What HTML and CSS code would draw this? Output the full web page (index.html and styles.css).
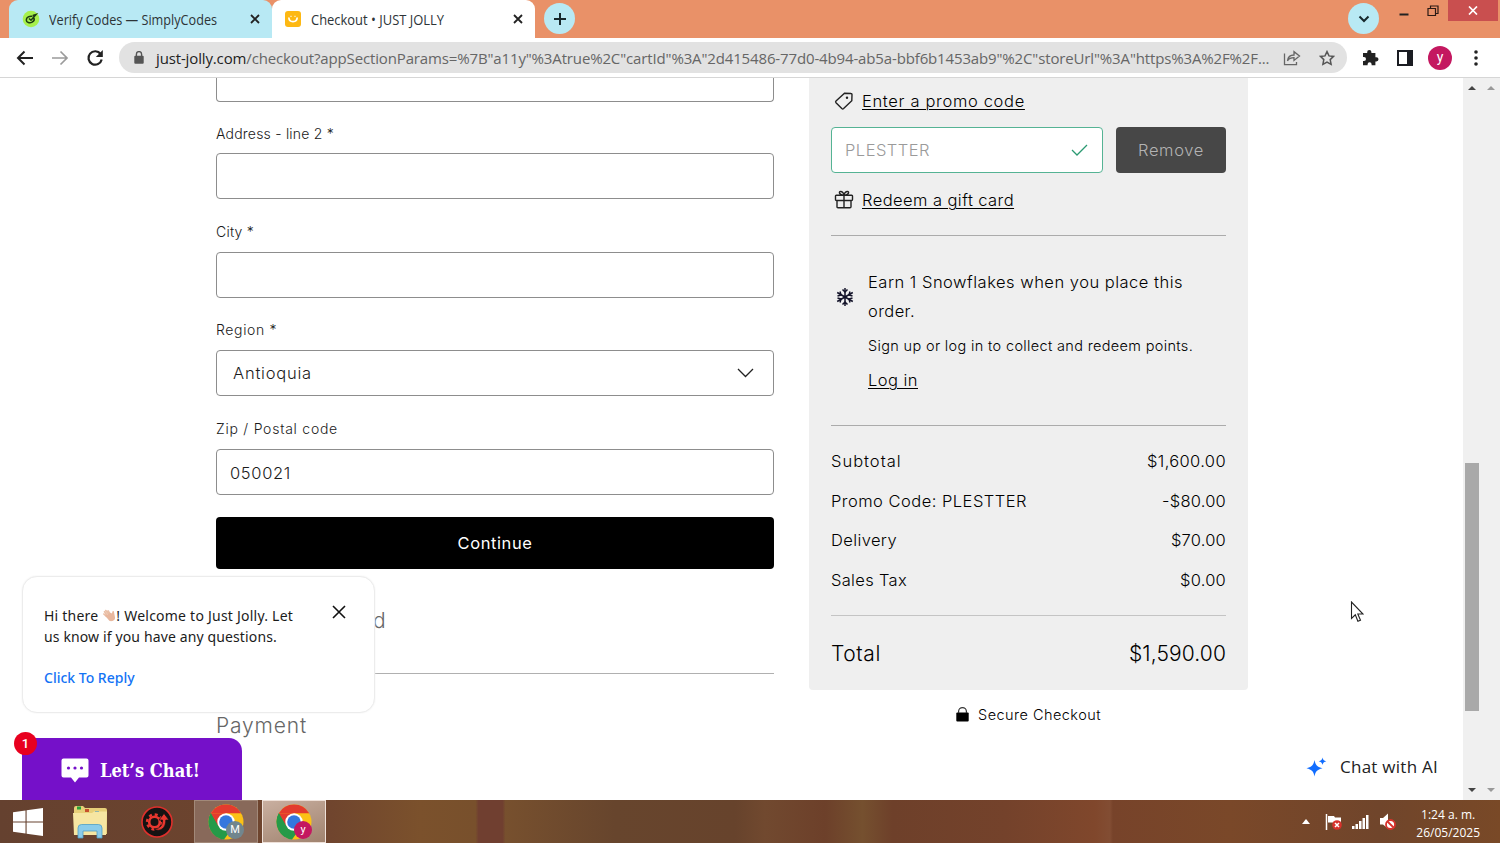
FILE: index.html
```html
<!DOCTYPE html>
<html lang="en">
<head>
<meta charset="utf-8">
<title>Checkout • JUST JOLLY</title>
<link rel="stylesheet" href="styles.css">
</head>
<body>
<div class="screen">
  <div class="tabstrip">
    <div class="tab tab-idle">
      <svg class="fav" width="18" height="18" viewBox="0 0 18 18"><circle cx="9" cy="9" r="8.300" fill="#a6f04c"/><path d="M10.500 6.300C7.500 5.600 4.300 7.500 4.300 10c0 2.600 3.500 3.500 5.800 2.200C12 11 12.500 9 11.800 7.800M7 8.500l2 1.800 5-5.800-3.200 1" fill="none" stroke="#1d3b12" stroke-width="1.500"/></svg>
      <span class="tab-title t1">Verify Codes — SimplyCodes</span>
      <svg class="x" width="10" height="10" viewBox="0 0 10 10"><path d="M1 1l8 8M9 1L1 9" stroke="#222" stroke-width="1.800"/></svg>
    </div>
    <div class="tab tab-live">
      <svg class="fav" width="18" height="18" viewBox="0 0 18 18"><rect x="1" y="1" width="16" height="16" rx="3" fill="#fdb813"/><path d="M4.800 7.500c.4 5.500 8 5.500 8.400 0" fill="none" stroke="#fff" stroke-width="1.700"/><path d="M6.500 6.300h1M10.500 6.300h1" stroke="#fff" stroke-width="1.200"/></svg>
      <span class="tab-title t2">Checkout • JUST JOLLY</span>
      <svg class="x" width="10" height="10" viewBox="0 0 10 10"><path d="M1 1l8 8M9 1L1 9" stroke="#222" stroke-width="1.800"/></svg>
    </div>
    <div class="round newtab"><svg width="14" height="14" viewBox="0 0 14 14"><path d="M7 1v12M1 7h12" stroke="#16282c" stroke-width="2"/></svg></div>
    <div class="round tabsearch"><svg width="12" height="8" viewBox="0 0 12 8"><path d="M1.500 1.500 6 6l4.500-4.500" fill="none" stroke="#16282c" stroke-width="2"/></svg></div>
    <div class="winbtns">
      <svg width="10" height="14" viewBox="0 0 10 14"><path d="M.5 12.500h9" stroke="#222" stroke-width="2"/></svg>
      <svg width="12" height="12" viewBox="0 0 12 12"><path d="M1 3.500h7.500v7H1zM3.500 3V1H11v7.500H9" fill="none" stroke="#2a1a14" stroke-width="1.200"/></svg>
    </div>
    <div class="winclose"><svg width="10" height="9" viewBox="0 0 10 9"><path d="M1 .5l8 8M9 .5l-8 8" stroke="#fff" stroke-width="1.700"/></svg></div>
  </div>

  <div class="toolbar">
    <svg class="nav" width="18" height="16" viewBox="0 0 18 16"><path d="M17 8H2M8.500 1.500 2 8l6.500 6.500" fill="none" stroke="#222" stroke-width="2"/></svg>
    <svg class="nav" width="18" height="16" viewBox="0 0 18 16"><path d="M1 8h15M9.500 1.500 16 8l-6.500 6.500" fill="none" stroke="#9b9b9b" stroke-width="1.700"/></svg>
    <svg class="nav reload" width="18" height="18" viewBox="0 0 18 18"><path d="M14.600 5A6.700 6.700 0 1 0 15.700 10.500" fill="none" stroke="#222" stroke-width="2.200"/><path d="M16.800 1v7h-7z" fill="#222"/></svg>
    <div class="omnibox">
      <svg width="10" height="13" viewBox="0 0 10 13"><rect x=".3" y="4.700" width="9.400" height="8" rx="1" fill="#555"/><path d="M2.400 5V3.200a2.600 2.600 0 0 1 5.200 0V5" fill="none" stroke="#555" stroke-width="1.400"/></svg>
      <span class="url"><b>just-jolly.com</b>/checkout?appSectionParams=%7B"a11y"%3Atrue%2C"cartId"%3A"2d415486-77d0-4b94-ab5a-bbf6b1453ab9"%2C"storeUrl"%3A"https%3A%2F%2F...</span>
      <svg class="share" width="18" height="16" viewBox="0 0 18 16"><path d="M1.500 3.500v11.200h12V12M4.500 10.800C5 7 7.500 5 11 5V1.700L16.500 6 11 10.500V7.700C8 7.700 6 8.500 4.500 10.800z" fill="none" stroke="#666" stroke-width="1.300"/></svg>
      <svg class="star" width="16" height="16" viewBox="0 0 16 16"><path d="M8 1.600l2 4.300 4.600.5-3.400 3.200.9 4.700L8 12l-4.100 2.300.9-4.700L1.400 6.400 6 5.900z" fill="none" stroke="#555" stroke-width="1.500"/></svg>
    </div>
    <svg class="puzzle" width="17" height="17" viewBox="0 0 17 17"><path d="M1 4h4.200V3a2.100 2.100 0 0 1 4.200 0v1h4v4.200h1a2.100 2.100 0 0 1 0 4.200h-1V16.300H9.600v-1a2 2 0 0 0-4 0v1H1v-4.200h1a2 2 0 0 0 0-4H1z" fill="#222"/></svg>
    <svg class="panel" width="16" height="16" viewBox="0 0 16 16"><rect x="1" y="1" width="14" height="14" fill="#fff" stroke="#1a1c22" stroke-width="2"/><path d="M10 1h5v14h-5z" fill="#1a1c22"/></svg>
    <div class="avatar">y</div>
    <svg class="dots" width="4" height="16" viewBox="0 0 4 16"><circle cx="2" cy="2" r="1.800"/><circle cx="2" cy="8" r="1.800"/><circle cx="2" cy="14" r="1.800"/></svg>
  </div>

  <div class="viewport">
    <div class="page">
      <div class="form">
        <div class="input first"></div>
        <div class="label"><span class="l1">Address - line 2 *</span></div>
        <div class="input"></div>
        <div class="label tall"><span class="l2">City *</span></div>
        <div class="input"></div>
        <div class="label mid"><span class="l3">Region *</span></div>
        <div class="input select"><span class="v1">Antioquia</span><svg width="17" height="10" viewBox="0 0 17 10"><path d="M1 1l7.500 7.500L16 1" fill="none" stroke="#222" stroke-width="1.300"/></svg></div>
        <div class="label tall"><span class="l4">Zip / Postal code</span></div>
        <div class="input"><span class="v2">050021</span></div>
        <div class="continue"><span class="c1">Continue</span></div>
        <div class="step covered"><span>d</span></div>
        <div class="step second"><span class="s2">Payment</span></div>
      </div>

      <div class="side">
        <div class="summary">
          <div class="promo">
            <svg width="20" height="20" viewBox="0 0 20 20"><path d="M10.500 2.200 17 2.500q1 0 1 1l-.2 6.300L9.600 17.600q-.9.800-1.800 0L2 11.800q-.8-.9 0-1.700z" fill="none" stroke="#222" stroke-width="1.400"/><circle cx="13" cy="6.700" r="1.200" fill="#222"/></svg>
            <a class="p1">Enter a promo code</a>
          </div>
          <div class="coupon">
            <div class="code"><span class="p2">PLESTTER</span><svg width="17" height="12" viewBox="0 0 17 12"><path d="M1 6l5 5L16 1" fill="none" stroke="#2b9a72" stroke-width="1.300"/></svg></div>
            <div class="remove"><span class="p3">Remove</span></div>
          </div>
          <div class="gift">
            <svg width="20" height="20" viewBox="0 0 20 20"><path d="M1.500 6q0-.8.8-.8h15.400q.8 0 .8.800v3.500q0 1-1 1h-15q-1 0-1-1zM3 10.500h14v6.300q0 1-1 1H4q-1 0-1-1zM10 5.200v12.600M10 5.200C5 5.200 4.500 1.500 6.500 1.500S10 3.500 10 5.200c0-1.700 1.500-3.700 3.500-3.700S15 5.200 10 5.200z" fill="none" stroke="#222" stroke-width="1.400" stroke-linejoin="round"/></svg>
            <a class="p4">Redeem a gift card</a>
          </div>
          <div class="points">
            <svg width="18" height="20" viewBox="0 0 18 20"><g fill="none" stroke="#14142a" stroke-width="1.500"><path d="M9 1v18M1.200 5.500l15.600 9M16.800 5.500l-15.600 9"/><path d="M6.500 2.500 9 5l2.500-2.500M6.500 17.500 9 15l2.500 2.500M1.500 9l3.500-1-1-3.500M16.500 11l-3.500 1 1 3.500M14 4.500 13 8l3.500 1M4 15.500 5 12l-3.500-1"/></g></svg>
            <div class="points-text">
              <p><span class="e1">Earn 1 Snowflakes when you place this</span><br><span class="e2">order.</span></p>
              <p class="small"><span class="e3">Sign up or log in to collect and redeem points.</span></p>
              <p class="login"><a class="e4">Log in</a></p>
            </div>
          </div>
          <div class="sums">
            <div class="row"><span class="r1">Subtotal</span><span class="amount a1">$1,600.00</span></div>
            <div class="row"><span class="r2">Promo Code: PLESTTER</span><span class="amount">-$80.00</span></div>
            <div class="row"><span class="r3">Delivery</span><span class="amount">$70.00</span></div>
            <div class="row"><span class="r4">Sales Tax</span><span class="amount">$0.00</span></div>
          </div>
          <div class="total"><span class="r5">Total</span><span class="a5">$1,590.00</span></div>
        </div>
        <div class="secure"><svg width="13" height="15" viewBox="0 0 13 15"><rect x=".3" y="5.500" width="12.400" height="9" rx="1"/><path d="M2.600 6V4.500a3.900 3.900 0 0 1 7.800 0V6" fill="none" stroke="#333" stroke-width="1.200"/></svg><span class="k1">Secure Checkout</span></div>
      </div>

      <div class="bubble">
        <div class="msg"><span class="m1">Hi there <svg width="14" height="13" viewBox="0 0 14 13"><path d="M4.500 5.500 2.500 2.700M6 4.500 3.800 1.500M7.800 4.500 6 1.800M4.500 7.500 1.800 5" stroke="#eabfa6" stroke-width="1.600" stroke-linecap="round"/><path d="M3 6.500 8.800 3.800c1 1.500 1.200.4 1.700-1.200.3-.9 1.500-.5 1.500.5L13 8.500c.4 3-3.500 4.500-5.700 3.200z" fill="#e8b79d"/></svg>! Welcome to Just Jolly. Let</span><br><span class="m2">us know if you have any questions.</span></div>
        <div class="reply"><span class="m3">Click To Reply</span></div>
        <svg class="bubble-x" width="14" height="14" viewBox="0 0 14 14"><path d="M1 1l12 12M13 1L1 13" stroke="#111" stroke-width="1.600"/></svg>
      </div>
      <div class="letschat">
        <svg width="28" height="25" viewBox="0 0 28 25"><path d="M2.500.5h23q2 0 2 2v15q0 2-2 2H18L14 24.500 10 19.500H2.500q-2 0-2-2v-15q0-2 2-2z" fill="#fff"/><g fill="#7510c9"><circle cx="7.500" cy="10" r="1.600"/><circle cx="14" cy="10" r="1.600"/><circle cx="20.500" cy="10" r="1.600"/></g></svg>
        <span class="m4">Let’s Chat!</span>
        <div class="badge">1</div>
      </div>
      <div class="ai">
        <svg width="21" height="20" viewBox="0 0 21 20"><path d="M8.500 3c1 5 2.500 6.800 8 8.300-5.500 1.400-7 3.200-8 8.200-1-5-2.500-6.800-8-8.200 5.500-1.500 7-3.300 8-8.300zM16.500.5c.5 2.300 1.200 3 3.800 3.800-2.600.7-3.300 1.500-3.800 3.800-.5-2.300-1.200-3.100-3.800-3.800 2.600-.8 3.300-1.500 3.800-3.800z" fill="#116dff"/></svg>
        <span class="m5">Chat with AI</span>
      </div>
      <svg class="cursor" width="14" height="22" viewBox="0 0 14 22"><path d="M1.500 1v16.500l3.800-3.700 2.600 6.500 2.600-1.100L7.800 13H13z" fill="#fff" stroke="#222" stroke-width="1.100"/></svg>
    </div>
    <div class="scroll">
      <div class="arrows"><i class="up"></i><i class="up pale"></i></div>
      <div class="thumb"></div>
      <div class="arrows"><i class="down"></i><i class="down pale"></i></div>
    </div>
  </div>

  <div class="taskbar">
    <svg class="win" width="30" height="28" viewBox="0 0 30 28"><path d="M0 4.200 12.500 2.400v11H0zM13.600 2.200 30 0v13.400H13.600zM0 14.500h12.500v11L0 23.800zM13.600 14.500H30V28l-16.400-2.300z" fill="#fff"/></svg>
    <svg class="files" width="36" height="34" viewBox="0 0 36 34"><path d="M2 3q0-2 2-2h7l2 2h20q2 0 2 2v24H2z" fill="#e7cf78"/><path d="M5 1.500h4v3H5z" fill="#29a33b"/><path d="M13 4h4v3h-4z" fill="#c7502c"/><path d="M23 6h4v3h-4z" fill="#2d86bb"/><path d="M1 8h19l2-1.500h13L34 30H2z" fill="#f6e6a2"/><path d="M6 33V23q0-3.500 3.500-3.500h17Q30 19.500 30 23v10h-5v-7H11v7z" fill="#8accea" stroke="#4e9fc7" stroke-width=".8"/></svg>
    <svg class="gear" width="34" height="34" viewBox="0 0 34 34"><circle cx="17" cy="17" r="15" fill="#151313" stroke="#de302c" stroke-width="1.600"/><circle cx="14.500" cy="17" r="5.300" fill="none" stroke="#e8372f" stroke-width="2.600"/><circle cx="14.500" cy="17" r="7.500" fill="none" stroke="#e8372f" stroke-width="2.400" stroke-dasharray="3 2.890"/><path d="M14 24c6 0 9-4 8.500-9H19l5-6.500 5 6.500h-3.200c.2 8-5.500 12.500-11.800 9z" fill="#e8372f" stroke="#151313" stroke-width=".7"/></svg>
    <div class="task">
      <svg width="38" height="38" viewBox="0 0 38 38"><circle cx="19" cy="19" r="17.500" fill="#fbc116"/><path d="M3.800 10.300A17.500 17.500 0 0 1 34.200 10.300H19z" fill="#e33b2e"/><path d="M3.800 10.300A17.500 17.500 0 0 0 17 36.400l9.600-13L19 19z" fill="#259a48"/><path d="M3.800 10.300 11.400 23.400 19 10.300z" fill="#e33b2e"/><path d="M3.800 10.300 11.400 23.400 17 26l-5 8.500A17.500 17.500 0 0 1 3.800 10.300z" fill="#259a48"/><circle cx="19" cy="19" r="8.700" fill="#fff"/><circle cx="19" cy="19" r="6.800" fill="#3577de"/></svg>
      <div class="who grey">M</div>
    </div>
    <div class="task live">
      <svg width="38" height="38" viewBox="0 0 38 38"><circle cx="19" cy="19" r="17.500" fill="#fbc116"/><path d="M3.800 10.300A17.500 17.500 0 0 1 34.200 10.300H19z" fill="#e33b2e"/><path d="M3.800 10.300A17.500 17.500 0 0 0 17 36.400l9.600-13L19 19z" fill="#259a48"/><path d="M3.800 10.300 11.400 23.400 19 10.300z" fill="#e33b2e"/><path d="M3.800 10.300 11.400 23.400 17 26l-5 8.500A17.500 17.500 0 0 1 3.800 10.300z" fill="#259a48"/><circle cx="19" cy="19" r="8.700" fill="#fff"/><circle cx="19" cy="19" r="6.800" fill="#3577de"/></svg>
      <div class="who pink">y</div>
    </div>
    <div class="tray">
      <svg width="8" height="5" viewBox="0 0 8 5"><path d="M0 5l4-5 4 5z" fill="#fff"/></svg>
      <svg class="flag" width="17" height="18" viewBox="0 0 17 18"><path d="M1.500 1v16" stroke="#fff" stroke-width="1.500"/><path d="M3 3h6l1 1.500h6V11H9L8 9.500H3z" fill="#fff"/><circle cx="12" cy="12" r="4.800" fill="#d8322c"/><path d="M10 10l4 4M14 10l-4 4" stroke="#fff" stroke-width="1.500"/></svg>
      <svg width="17" height="14" viewBox="0 0 17 14"><path d="M0 11h2.500v3H0zM3.500 9H6v5H3.500zM7 6h2.500v8H7zM10.500 3H13v11h-2.500zM14 0h2.500v14H14z" fill="#fff"/></svg>
      <svg width="17" height="17" viewBox="0 0 17 17"><path d="M1 5h3l5-4.500v15L4 11.500H1z" fill="#fff"/><circle cx="11.500" cy="11.500" r="4.500" fill="#fff" stroke="#d8322c" stroke-width="1.800"/><path d="M8.500 8.500l6 6" stroke="#d8322c" stroke-width="1.800"/></svg>
      <div class="clock"><span>1:24 a. m.</span><span>26/05/2025</span></div>
    </div>
  </div>
</div>
</body>
</html>
```

FILE: styles.css
```css
* { box-sizing: border-box; }
body { margin: 0; font-family: Inter, "Open Sans", sans-serif; color: #1b1b1b; }
svg { display: block; flex: none; }
p { margin: 0; }
span, a { white-space: nowrap; }
.screen { width: 1500px; height: 843px; overflow: hidden; display: flex; flex-direction: column; background: #fff; }

.tabstrip { height: 38px; flex: none; background: #e99168; display: flex; font-family: "Open Sans", "Noto Sans", sans-serif; }
.tab { display: flex; align-items: center; height: 38px; }
.tab-title { font-size: 14px; color: #2d3437; transform-origin: left; }
.t1 { transform: scaleX(0.903); }
.t2 { transform: scaleX(0.924); }
.tab .fav { margin-right: 9px; }
.tab .x { margin-left: auto; }
.tab-idle { width: 263px; margin-left: 9px; padding: 0 12px 0 13px; background: #b8e9f4; border-radius: 9px 9px 0 0; }
.tab-live { width: 263px; padding: 0 12px 0 12px; background: #fff; border-radius: 9px 9px 0 0; }
.round { width: 31px; height: 31px; border-radius: 50%; background: #b8e9f4; display: flex; align-items: center; justify-content: center; margin-top: 3px; }
.newtab { margin-left: 9px; }
.tabsearch { margin-left: 773px; }
.winbtns { display: flex; gap: 18px; padding: 5px 0 0 20px; width: 69px; }
.winbtns svg:first-child { margin-top: -3px; }
.winclose { width: 50px; height: 21px; background: #c94f4f; display: flex; align-items: center; justify-content: center; }

.toolbar { height: 40px; flex: none; border-bottom: 1px solid #d6d6d6; display: flex; align-items: center; padding: 0 0 0 16px; }
.nav { margin-right: 17px; }
.reload { margin-right: 15px; }
.omnibox { width: 1228px; height: 31px; border-radius: 16px; background: #e2e2e2; display: flex; align-items: center; padding-left: 15px; }
.url { margin-left: 12px; font: 15px "Open Sans", "Noto Sans", sans-serif; letter-spacing: -0.14px; color: #666; width: 1113px; flex: none; }
.url b { font-weight: 400; color: #222; }
.share { margin-left: 14px; }
.star { margin-left: 18px; }
.puzzle { margin-left: 15px; }
.panel { margin-left: 18px; }
.avatar { width: 24px; height: 24px; margin-left: 15px; border-radius: 50%; background: #c41860; color: #fff; font: 14px/22px Roboto, sans-serif; text-align: center; }
.dots { margin-left: 22px; fill: #222; }

.viewport { height: 722px; flex: none; display: flex; }
.page { position: relative; width: 1463px; height: 722px; overflow: hidden; display: flex; align-items: flex-start; padding-left: 216px; gap: 35px; }
.form { width: 558px; }
.input { height: 46px; border: 1px solid #8d8d8d; border-radius: 4px; display: flex; align-items: center; padding: 1px 0 0 13px; font-size: 16.500px; font-weight: 300; }
.input.first { height: 24px; border-top: 0; border-radius: 0 0 4px 4px; }
.input.select { justify-content: space-between; padding: 0 19px 0 16px; }
.label { height: 51px; padding-top: 20px; font-size: 14px; line-height: 24px; font-weight: 300; }
.label.mid { height: 52px; }
.label.tall { height: 53px; padding-top: 21px; }
.l1, .l2 { letter-spacing: 0.21px; }
.l3 { letter-spacing: 0.63px; }
.l4 { letter-spacing: 0.75px; }
.v1 { letter-spacing: 0.78px; }
.v2 { letter-spacing: 0.67px; }
.c1 { letter-spacing: 0.6px; }
.s2 { letter-spacing: 0.83px; }
.continue { margin-top: 22px; height: 52px; background: #000; color: #fff; border-radius: 4px; display: flex; align-items: center; justify-content: center; font-size: 16.500px; }
.step { height: 105px; border-bottom: 1px solid #b0b0b0; font-size: 21px; font-weight: 300; line-height: 104px; color: #666; }
.step.covered { padding-left: 157px; }
.step.second { border: 0; }

.side { width: 439px; }
.summary { background: #efefef; height: 612px; padding: 0 22px; border-radius: 0 0 4px 4px; font-size: 16.500px; font-weight: 300; color: #000; }
.promo { display: flex; align-items: center; height: 49px; padding-left: 3px; gap: 8px; padding-bottom: 3px; }
.promo a, .gift a, .login a { text-decoration: underline; text-underline-offset: 2px; text-decoration-thickness: 1px; }
.p1 { letter-spacing: 0.67px; }
.p2 { letter-spacing: 0.48px; }
.p3 { letter-spacing: 0.65px; }
.p4 { letter-spacing: 0.43px; }
.coupon { display: flex; gap: 13px; height: 46px; }
.code { width: 272px; border: 1px solid #55b394; border-radius: 4px; background: #fff; color: #9a9a9a; display: flex; align-items: center; justify-content: space-between; padding: 0 14px 0 13px; }
.remove { width: 110px; border-radius: 4px; background: #474747; color: #b3b3b3; display: flex; align-items: center; justify-content: center; }
.gift { display: flex; align-items: center; height: 63px; padding: 0 0 8px 3px; gap: 8px; border-bottom: 1px solid #ababab; }
.points { height: 190px; border-bottom: 1px solid #ababab; display: flex; padding: 32px 0 0 5px; }
.points > svg { margin: 19px 14px 0 0; }
.points-text { line-height: 28.500px; }
.e1 { letter-spacing: 0.5px; }
.e2 { letter-spacing: 0.42px; }
.e3 { letter-spacing: 0.34px; }
.e4 { letter-spacing: 0.46px; }
.small { font-size: 14.500px; line-height: 41px; }
.login { line-height: 29px; }
.sums { padding-top: 16px; height: 190px; border-bottom: 1px solid #c4c4c4; }
.row { display: flex; justify-content: space-between; line-height: 39.500px; }
.r1 { letter-spacing: 1px; }
.r2 { letter-spacing: 0.48px; }
.r3 { letter-spacing: 0.38px; }
.r4 { letter-spacing: 0.31px; }
.amount { letter-spacing: 0.22px; }
.a1 { letter-spacing: 0.37px; }
.total { display: flex; justify-content: space-between; font-size: 21px; line-height: 76px; }
.r5 { letter-spacing: 0.6px; }
.a5 { letter-spacing: 0.11px; }
.secure { display: flex; align-items: center; justify-content: center; gap: 9px; height: 48px; font-size: 14.500px; font-weight: 300; color: #000; }
.k1 { letter-spacing: 0.46px; }

.bubble { position: absolute; left: 22px; top: 498px; width: 353px; height: 137px; background: #fff; border: 1px solid #ececec; border-radius: 15px; padding: 28px 21px; box-shadow: 0 0 2px #eee; font-family: "Noto Sans", sans-serif; font-size: 14px; line-height: 21px; }
.msg svg { display: inline; vertical-align: -1px; }
.m1 { letter-spacing: 0.23px; }
.m2 { letter-spacing: 0.13px; }
.reply { margin-top: 20px; color: #1373f5; font-weight: 500; }
.bubble-x { position: absolute; right: 28px; top: 28px; }
.letschat { position: absolute; left: 22px; top: 660px; width: 220px; height: 62px; background: #7510c9; border-radius: 0 13px 0 0; display: flex; align-items: center; gap: 11px; padding: 2px 0 0 39px; color: #fff; font: bold 18px "DejaVu Serif", serif; }
.m4 { transform: scaleX(0.905); transform-origin: left; }
.badge { position: absolute; left: -8px; top: -6px; width: 23px; height: 23px; border-radius: 50%; background: #e8001f; font: 500 13px/23px Roboto, sans-serif; text-align: center; }
.ai { position: absolute; left: 1306px; top: 676px; display: flex; align-items: center; gap: 13px; font: 17px/26px "Open Sans", sans-serif; color: #222; }
.m5 { letter-spacing: 0.26px; }
.cursor { position: absolute; left: 1350px; top: 523px; }

.scroll { width: 37px; background: #f0f0f0; padding: 8px 5px 8px; display: flex; flex-direction: column; }
.thumb { width: 14px; height: 248px; margin: 373px 0 auto -3px; background: #a9a9a9; }
.arrows { display: flex; gap: 11px; height: 4px; }
.up, .down { width: 8px; height: 4px; background: #444; clip-path: polygon(50% 0, 100% 100%, 0 100%); }
.down { clip-path: polygon(0 0, 100% 0, 50% 100%); }
.pale { background: #999; }

.taskbar { height: 43px; flex: none; display: flex; align-items: center; background: linear-gradient(90deg, #65412f 0, #70452e 22%, #7b512c 28%, #78502c 31.700%, #703f30 31.900%, #703f30 33.500%, #77502e 33.700%, #67452d 41%, #67432c 49%, #71492f 51%, #6d402a 55%, #75502f 57.500%, #6e402a 59.500%, #74422b 67%, #80472c 73%, #824d33 74%, #77432a 74.200%, #7a4829 82%, #70452b 92%, #794927 100%); }
.win { margin-left: 13px; }
.files { margin-left: 29px; }
.gear { margin-left: 32px; }
.task { position: relative; width: 64px; height: 43px; margin-left: 20px; padding: 2px 0 0 12px; border: 1px solid #a28979; background: #88695a; }
.task.live { margin-left: 4px; background: linear-gradient(160deg, #c9afa0, #a0836f); border: 1px solid #eee0d8; }
.who { position: absolute; left: 31px; top: 20px; width: 18px; height: 18px; border-radius: 50%; color: #fff; font: 11px/18px Roboto, sans-serif; text-align: center; }
.grey { background: #71868e; }
.pink { background: #c41860; }
.tray { margin-left: auto; display: flex; align-items: center; gap: 10px; padding-right: 20px; }
.flag { margin-left: 5px; }
.clock { margin-left: 10px; display: flex; flex-direction: column; align-items: center; color: #fff; font: 12px/18px "Open Sans", sans-serif; padding-top: 4px; }
```
